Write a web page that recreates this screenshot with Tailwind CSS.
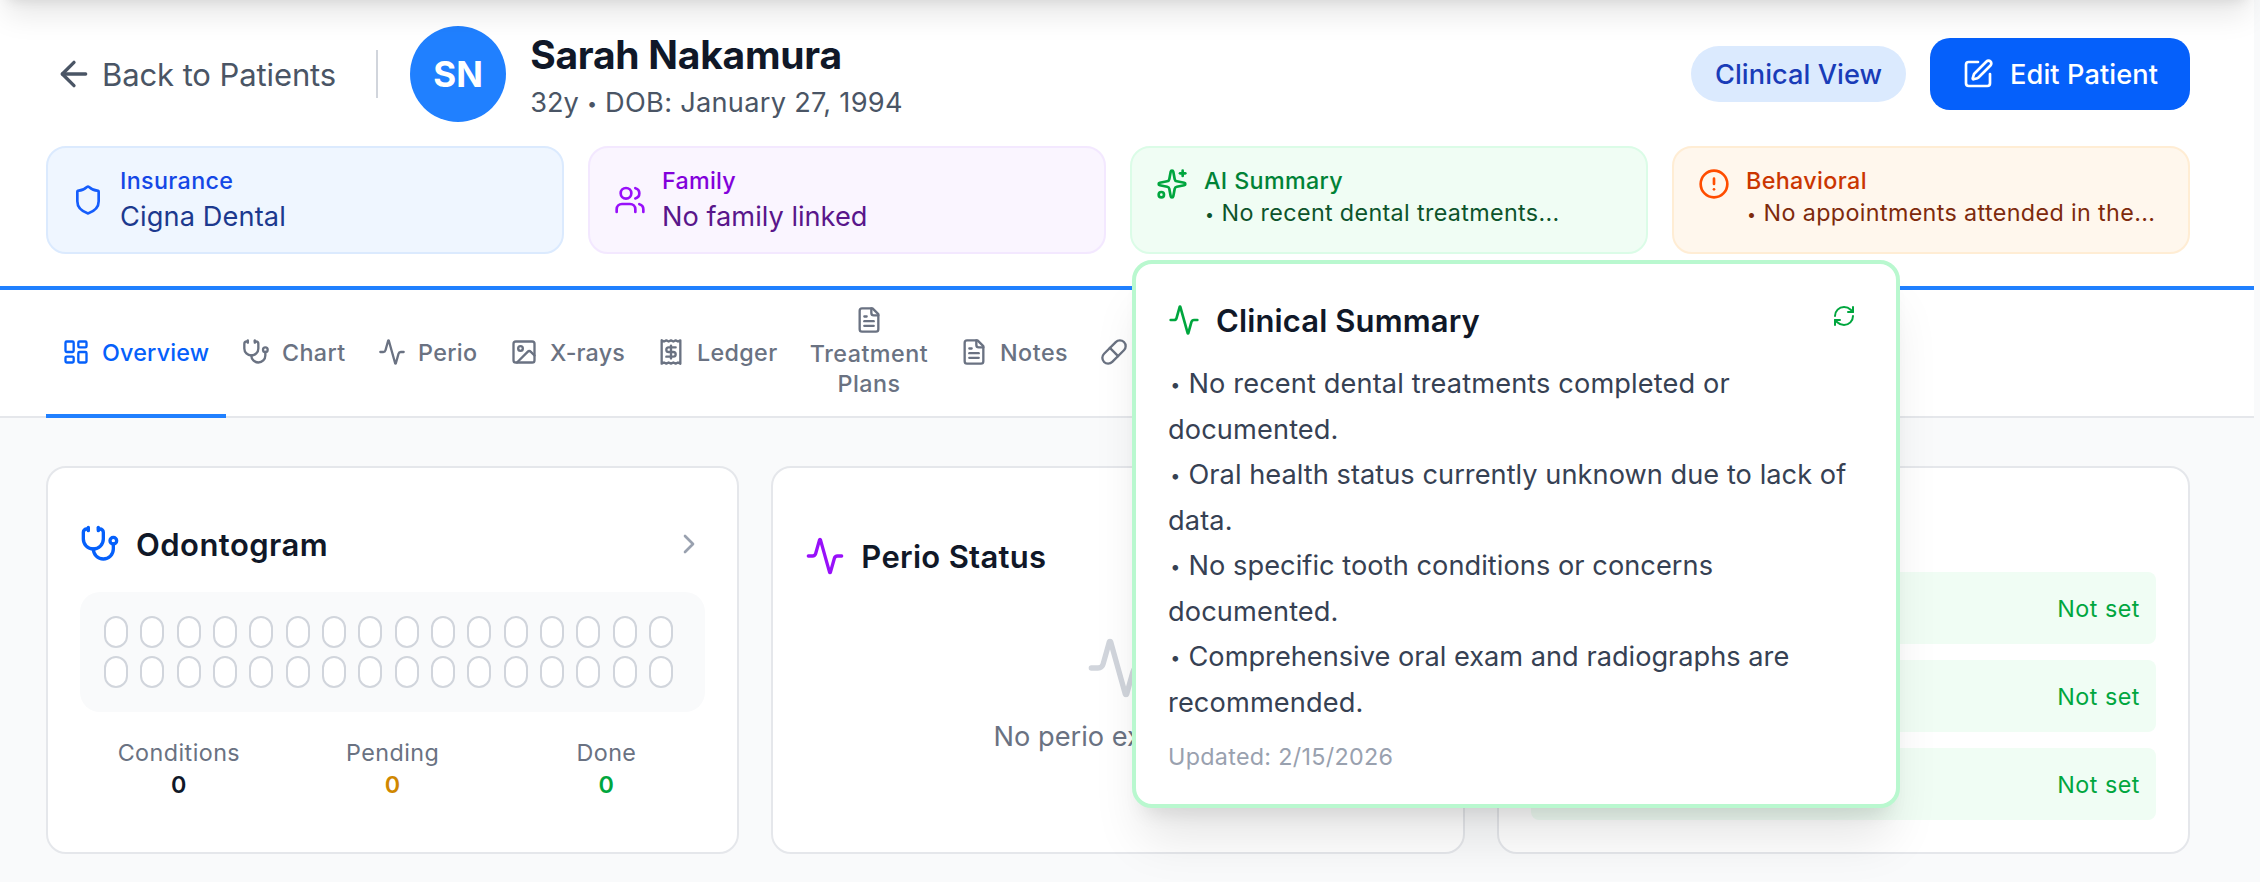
<!DOCTYPE html>
<html lang="en">
<head>
    <meta charset="UTF-8">
    <meta name="viewport" content="width=device-width, initial-scale=1.0">
    <title>Sarah Nakamura - Patient Overview</title>
    <script src="https://cdn.jsdelivr.net/npm/@tailwindcss/browser@4"></script>
    <style>
        body { font-family: Inter, 'Liberation Sans', sans-serif; }
        svg { fill: none; stroke: currentColor; stroke-width: 2; stroke-linecap: round; stroke-linejoin: round; flex-shrink: 0; }
    </style>
</head>
<body class="relative h-[882px] overflow-hidden bg-gray-50 text-gray-900">
    <!-- icon sprite -->
    <svg class="hidden">
        <symbol id="arrow-left" viewBox="0 0 24 24"><path d="m12 19-7-7 7-7"/><path d="M19 12H5"/></symbol>
        <symbol id="pen" viewBox="0 0 24 24"><path d="M12 3H5a2 2 0 0 0-2 2v14a2 2 0 0 0 2 2h14a2 2 0 0 0 2-2v-7"/><path d="M18.375 2.625a1 1 0 0 1 3 3l-9.013 9.014a2 2 0 0 1-.853.505l-2.873.84a.5.5 0 0 1-.62-.62l.84-2.873a2 2 0 0 1 .506-.852z"/></symbol>
        <symbol id="shield" viewBox="0 0 24 24"><path d="M20 13c0 5-3.5 7.5-7.66 8.95a1 1 0 0 1-.67-.01C7.5 20.5 4 18 4 13V6a1 1 0 0 1 1-1c2 0 4.5-1.2 6.24-2.72a1.17 1.17 0 0 1 1.52 0C14.51 3.81 17 5 19 5a1 1 0 0 1 1 1z"/></symbol>
        <symbol id="users" viewBox="0 0 24 24"><path d="M16 21v-2a4 4 0 0 0-4-4H6a4 4 0 0 0-4 4v2"/><path d="M16 3.128a4 4 0 0 1 0 7.744"/><path d="M22 21v-2a4 4 0 0 0-3-3.87"/><circle cx="9" cy="7" r="4"/></symbol>
        <symbol id="sparkles" viewBox="0 0 24 24"><path d="M11.017 2.814a1 1 0 0 1 1.966 0l1.051 5.558a2 2 0 0 0 1.594 1.594l5.558 1.051a1 1 0 0 1 0 1.966l-5.558 1.051a2 2 0 0 0-1.594 1.594l-1.051 5.558a1 1 0 0 1-1.966 0l-1.051-5.558a2 2 0 0 0-1.594-1.594l-5.558-1.051a1 1 0 0 1 0-1.966l5.558-1.051a2 2 0 0 0 1.594-1.594z"/><path d="M20 2v4"/><path d="M22 4h-4"/><circle cx="4" cy="20" r="2"/></symbol>
        <symbol id="alert" viewBox="0 0 24 24"><circle cx="12" cy="12" r="10"/><path d="M12 8v4"/><path d="M12 16h.01"/></symbol>
        <symbol id="dashboard" viewBox="0 0 24 24"><rect width="7" height="9" x="3" y="3" rx="1"/><rect width="7" height="5" x="14" y="3" rx="1"/><rect width="7" height="9" x="14" y="12" rx="1"/><rect width="7" height="5" x="3" y="16" rx="1"/></symbol>
        <symbol id="stethoscope" viewBox="0 0 24 24"><path d="M11 2v2"/><path d="M5 2v2"/><path d="M5 3H4a2 2 0 0 0-2 2v4a6 6 0 0 0 12 0V5a2 2 0 0 0-2-2h-1"/><path d="M8 15a6 6 0 0 0 12 0v-3"/><circle cx="20" cy="10" r="2"/></symbol>
        <symbol id="activity" viewBox="0 0 24 24"><path d="M22 12h-2.48a2 2 0 0 0-1.93 1.46l-2.35 8.36a.25.25 0 0 1-.48 0L9.24 2.18a.25.25 0 0 0-.48 0l-2.35 8.36A2 2 0 0 1 4.49 12H2"/></symbol>
        <symbol id="image" viewBox="0 0 24 24"><rect width="18" height="18" x="3" y="3" rx="2"/><circle cx="9" cy="9" r="2"/><path d="m21 15-3.086-3.086a2 2 0 0 0-2.828 0L6 21"/></symbol>
        <symbol id="receipt" viewBox="0 0 24 24"><path d="M4 2v20l2-1 2 1 2-1 2 1 2-1 2 1 2-1 2 1V2l-2 1-2-1-2 1-2-1-2 1-2-1-2 1Z"/><path d="M16 8h-6a2 2 0 1 0 0 4h4a2 2 0 1 1 0 4H8"/><path d="M12 17.5v-11"/></symbol>
        <symbol id="file" viewBox="0 0 24 24"><path d="M15 2H6a2 2 0 0 0-2 2v16a2 2 0 0 0 2 2h12a2 2 0 0 0 2-2V7Z"/><path d="M14 2v4a2 2 0 0 0 2 2h4"/><path d="M10 9H8"/><path d="M16 13H8"/><path d="M16 17H8"/></symbol>
        <symbol id="pill" viewBox="0 0 24 24"><path d="m10.5 20.5 10-10a4.95 4.95 0 1 0-7-7l-10 10a4.95 4.95 0 1 0 7 7Z"/><path d="m8.5 8.5 7 7"/></symbol>
        <symbol id="chevron" viewBox="0 0 24 24"><path d="m9 18 6-6-6-6"/></symbol>
        <symbol id="refresh" viewBox="0 0 24 24"><path d="M3 12a9 9 0 0 1 9-9 9.75 9.75 0 0 1 6.74 2.74L21 8"/><path d="M21 3v5h-5"/><path d="M21 12a9 9 0 0 1-9 9 9.75 9.75 0 0 1-6.74-2.74L3 16"/><path d="M8 16H3v5"/></symbol>
    </svg>

    <div class="w-[2254px]">
        <!-- patient header -->
        <header class="relative z-10 h-[290px] border-b-4 border-[#2080ff] bg-white pl-[46px] pr-16 pt-[26px]">
            <div class="flex h-24 items-center">
                <a class="flex items-center gap-2 pl-2 text-gray-600">
                    <svg class="size-10"><use href="#arrow-left"/></svg>
                    <span class="pt-0.5 text-[31px] tracking-[-0.1px]">Back to Patients</span>
                </a>
                <div class="ml-10 mr-8 h-12 w-0.5 bg-gray-300"></div>
                <div class="flex size-24 items-center justify-center rounded-full bg-[#2080ff] text-[35px] font-bold text-white">SN</div>
                <div class="ml-6 pt-px">
                    <h1 class="text-[39px] font-bold leading-[56px] tracking-[-0.25px]">Sarah Nakamura</h1>
                    <p class="text-[27.2px] leading-10 text-gray-600">32y <span class="inline-block w-[11px] text-center align-[2px] text-[18px] leading-none">•</span> <span class="tracking-[0.28px]">DOB: January 27, 1994</span></p>
                </div>
                <div class="ml-auto flex items-center gap-6">
                    <span class="flex h-14 items-center rounded-full bg-blue-100 px-6 pt-[3px] text-[27.2px] font-medium tracking-[0.04px] text-blue-800">Clinical View</span>
                    <button class="flex h-[72px] items-center gap-4 rounded-[20px] bg-[#0560fb] px-8 text-[27.2px] font-medium tracking-[0.08px] text-white">
                        <svg class="size-8"><use href="#pen"/></svg>
                        <span class="pt-[3px]">Edit Patient</span>
                    </button>
                </div>
            </div>

            <div class="mt-6 grid grid-cols-4 gap-6">
                <div class="flex h-[108px] items-center gap-4 rounded-[20px] border-2 border-blue-100 bg-blue-50 px-6">
                    <svg class="size-8 text-blue-600"><use href="#shield"/></svg>
                    <div class="pt-0.5">
                        <p class="text-[23.3px] font-medium leading-8 tracking-[0.35px] text-blue-700">Insurance</p>
                        <p class="text-[27.2px] leading-10 tracking-[0.12px] text-blue-900">Cigna Dental</p>
                    </div>
                </div>
                <div class="flex h-[108px] items-center gap-4 rounded-[20px] border-2 border-purple-100 bg-purple-50 px-6">
                    <svg class="size-8 text-purple-600"><use href="#users"/></svg>
                    <div class="pt-0.5">
                        <p class="text-[23.3px] font-medium leading-8 tracking-[0.25px] text-purple-700">Family</p>
                        <p class="text-[27.2px] leading-10 text-purple-900">No family linked</p>
                    </div>
                </div>
                <div class="relative flex h-[108px] gap-4 rounded-[20px] border-2 border-green-100 bg-green-50 px-6 py-4">
                    <svg class="mt-1 size-8 text-green-600"><use href="#sparkles"/></svg>
                    <div class="pt-px text-[23.3px] leading-8 tracking-[0.35px]">
                        <p class="font-medium text-green-700">AI Summary</p>
                        <p class="text-green-900"><span class="inline-block w-[17.5px] pr-1.5 text-center align-[1px] text-[16px] leading-none">•</span>No recent dental treatments...</p>
                    </div>

                    <!-- clinical summary popover -->
                    <div class="absolute left-0 top-full mt-2 h-[548px] w-[768px] rounded-[20px] border-4 border-green-200 bg-white p-8 shadow-[0_40px_50px_-10px_rgb(0_0_0/0.1),0_16px_20px_-12px_rgb(0_0_0/0.1)]">
                        <div class="flex h-12 items-start justify-between">
                            <div class="flex h-12 items-center gap-4">
                                <svg class="size-8 text-green-600"><use href="#activity"/></svg>
                                <h3 class="pt-0.5 text-[31px] font-semibold tracking-[0.12px]">Clinical Summary</h3>
                            </div>
                            <button class="p-2 text-green-600"><svg class="size-6"><use href="#refresh"/></svg></button>
                        </div>
                        <p class="mt-[17px] whitespace-nowrap text-[27.2px] leading-[45.5px] tracking-[0.12px] text-gray-700">
                            <span class="inline-block w-[20.5px] pr-1.5 text-center align-[2px] text-[18px] leading-none">•</span>No recent dental treatments completed or<br>
                            documented.<br>
                            <span class="inline-block w-[20.5px] pr-1.5 text-center align-[2px] text-[18px] leading-none">•</span><span class="tracking-[0.04px]">Oral health status currently unknown due to lack of</span><br>
                            data.<br>
                            <span class="inline-block w-[20.5px] pr-1.5 text-center align-[2px] text-[18px] leading-none">•</span><span class="tracking-[0.05px]">No specific tooth conditions or concerns</span><br>
                            documented.<br>
                            <span class="inline-block w-[20.5px] pr-1.5 text-center align-[2px] text-[18px] leading-none">•</span><span class="tracking-[0px]">Comprehensive oral exam and radiographs are</span><br>
                            recommended.
                        </p>
                        <p class="mt-4 text-[23.3px] leading-8 tracking-[0.31px] text-gray-400">Updated: 2/15/2026</p>
                    </div>
                </div>
                <div class="flex h-[108px] gap-4 rounded-[20px] border-2 border-orange-100 bg-orange-50 px-6 py-4">
                    <svg class="mt-1 size-8 text-[#ff4d00]"><use href="#alert"/></svg>
                    <div class="pt-px text-[23.3px] leading-8 tracking-[0.37px]">
                        <p class="font-medium text-orange-700">Behavioral</p>
                        <p class="text-orange-900"><span class="inline-block w-[17.5px] pr-1.5 text-center align-[1px] text-[16px] leading-none">•</span>No appointments attended in the...</p>
                    </div>
                </div>
            </div>
        </header>

        <!-- section tabs -->
        <nav class="flex h-32 border-b-2 border-gray-200 bg-white pl-[46px] text-[23.3px] font-medium leading-[30px] tracking-[0.35px] text-gray-500">
            <a class="-mb-0.5 flex w-[180px] items-center gap-3 border-b-4 border-[#2080ff] px-4 tracking-[0.2px] text-[#0560fb]"><svg class="size-7"><use href="#dashboard"/></svg><span class="pt-0.5">Overview</span></a>
            <a class="flex w-[136px] items-center gap-3 px-4 pb-0.5"><svg class="size-7"><use href="#stethoscope"/></svg><span class="pt-0.5">Chart</span></a>
            <a class="flex w-[132px] items-center gap-3 px-4 pb-0.5"><svg class="size-7"><use href="#activity"/></svg><span class="pt-0.5">Perio</span></a>
            <a class="flex w-[147px] items-center gap-3 px-4 pb-0.5 tracking-[0.15px]"><svg class="size-7"><use href="#image"/></svg><span class="pt-0.5">X-rays</span></a>
            <a class="flex w-[153px] items-center gap-3 px-4 pb-0.5"><svg class="size-7"><use href="#receipt"/></svg><span class="pt-0.5">Ledger</span></a>
            <a class="flex w-[150px] flex-col items-center pt-4 text-center tracking-[0.5px]"><svg class="mb-[5px] size-7"><use href="#file"/></svg><span>Treatment</span><span>Plans</span></a>
            <a class="flex w-[140px] items-center gap-3 px-4 pb-0.5 tracking-[0.5px]"><svg class="size-7"><use href="#file"/></svg><span class="pt-0.5">Notes</span></a>
            <a class="flex items-center px-4 pb-0.5"><svg class="size-7"><use href="#pill"/></svg></a>
        </nav>

        <!-- overview cards -->
        <main class="grid grid-cols-3 gap-8 pl-[46px] pr-16 pt-12">
            <section class="h-[388px] rounded-[20px] border-2 border-gray-200 bg-white px-8 pt-[52px]">
                <div class="flex h-12 items-center gap-4">
                    <svg class="size-10 text-[#0560fb]"><use href="#stethoscope"/></svg>
                    <h2 class="pt-0.5 text-[31px] font-semibold tracking-[0.45px]">Odontogram</h2>
                    <svg class="ml-auto size-8 text-gray-400"><use href="#chevron"/></svg>
                </div>
                <div id="teeth" class="mt-6 grid grid-cols-16 gap-x-1 gap-y-2 rounded-[20px] bg-gray-50 p-6"></div>
                <div class="mt-[25px] grid grid-cols-3 gap-4 text-center text-[23.3px] leading-8 tracking-[0.45px]">
                    <div><p class="text-gray-500">Conditions</p><p class="font-semibold">0</p></div>
                    <div><p class="text-gray-500">Pending</p><p class="font-semibold text-yellow-600">0</p></div>
                    <div><p class="text-gray-500">Done</p><p class="font-semibold text-green-600">0</p></div>
                </div>
            </section>

            <section class="h-[388px] rounded-[20px] border-2 border-gray-200 bg-white px-8 pt-16">
                <div class="flex h-12 items-center gap-4">
                    <svg class="size-10 text-purple-600"><use href="#activity"/></svg>
                    <h2 class="pt-0.5 text-[31px] font-semibold tracking-[0.3px]">Perio Status</h2>
                </div>
                <div class="mt-14 flex flex-col items-center">
                    <svg class="size-16 text-gray-300"><use href="#activity"/></svg>
                    <p class="mt-[17px] text-[27.2px] leading-10 text-gray-500">No perio exams yet</p>
                </div>
            </section>

            <section class="flex h-[388px] flex-col gap-4 rounded-[20px] border-2 border-gray-200 bg-white px-8 pt-[104px] text-[23.3px] tracking-[0.5px] text-green-600">
                <div class="flex h-[72px] items-center justify-end rounded-lg bg-green-50 px-4 pt-[3px]">Not set</div>
                <div class="flex h-[72px] items-center justify-end rounded-lg bg-green-50 px-4 pt-[3px]">Not set</div>
                <div class="flex h-[72px] items-center justify-end rounded-lg bg-green-50 px-4 pt-[3px]">Not set</div>
            </section>
        </main>
    </div>

    <!-- shadow of the app bar above -->
    <div class="absolute -top-20 left-0 z-20 h-20 w-[2254px] shadow-[0_20px_30px_-6px_rgb(0_0_0/0.1),0_8px_12px_-8px_rgb(0_0_0/0.1)]"></div>

    <script>
        const teeth = document.getElementById('teeth');
        for (let i = 0; i < 32; i++) {
            const tooth = document.createElement('div');
            tooth.className = 'h-8 w-6 rounded-full border-2 border-gray-300 bg-white';
            teeth.appendChild(tooth);
        }
    </script>
</body>
</html>
